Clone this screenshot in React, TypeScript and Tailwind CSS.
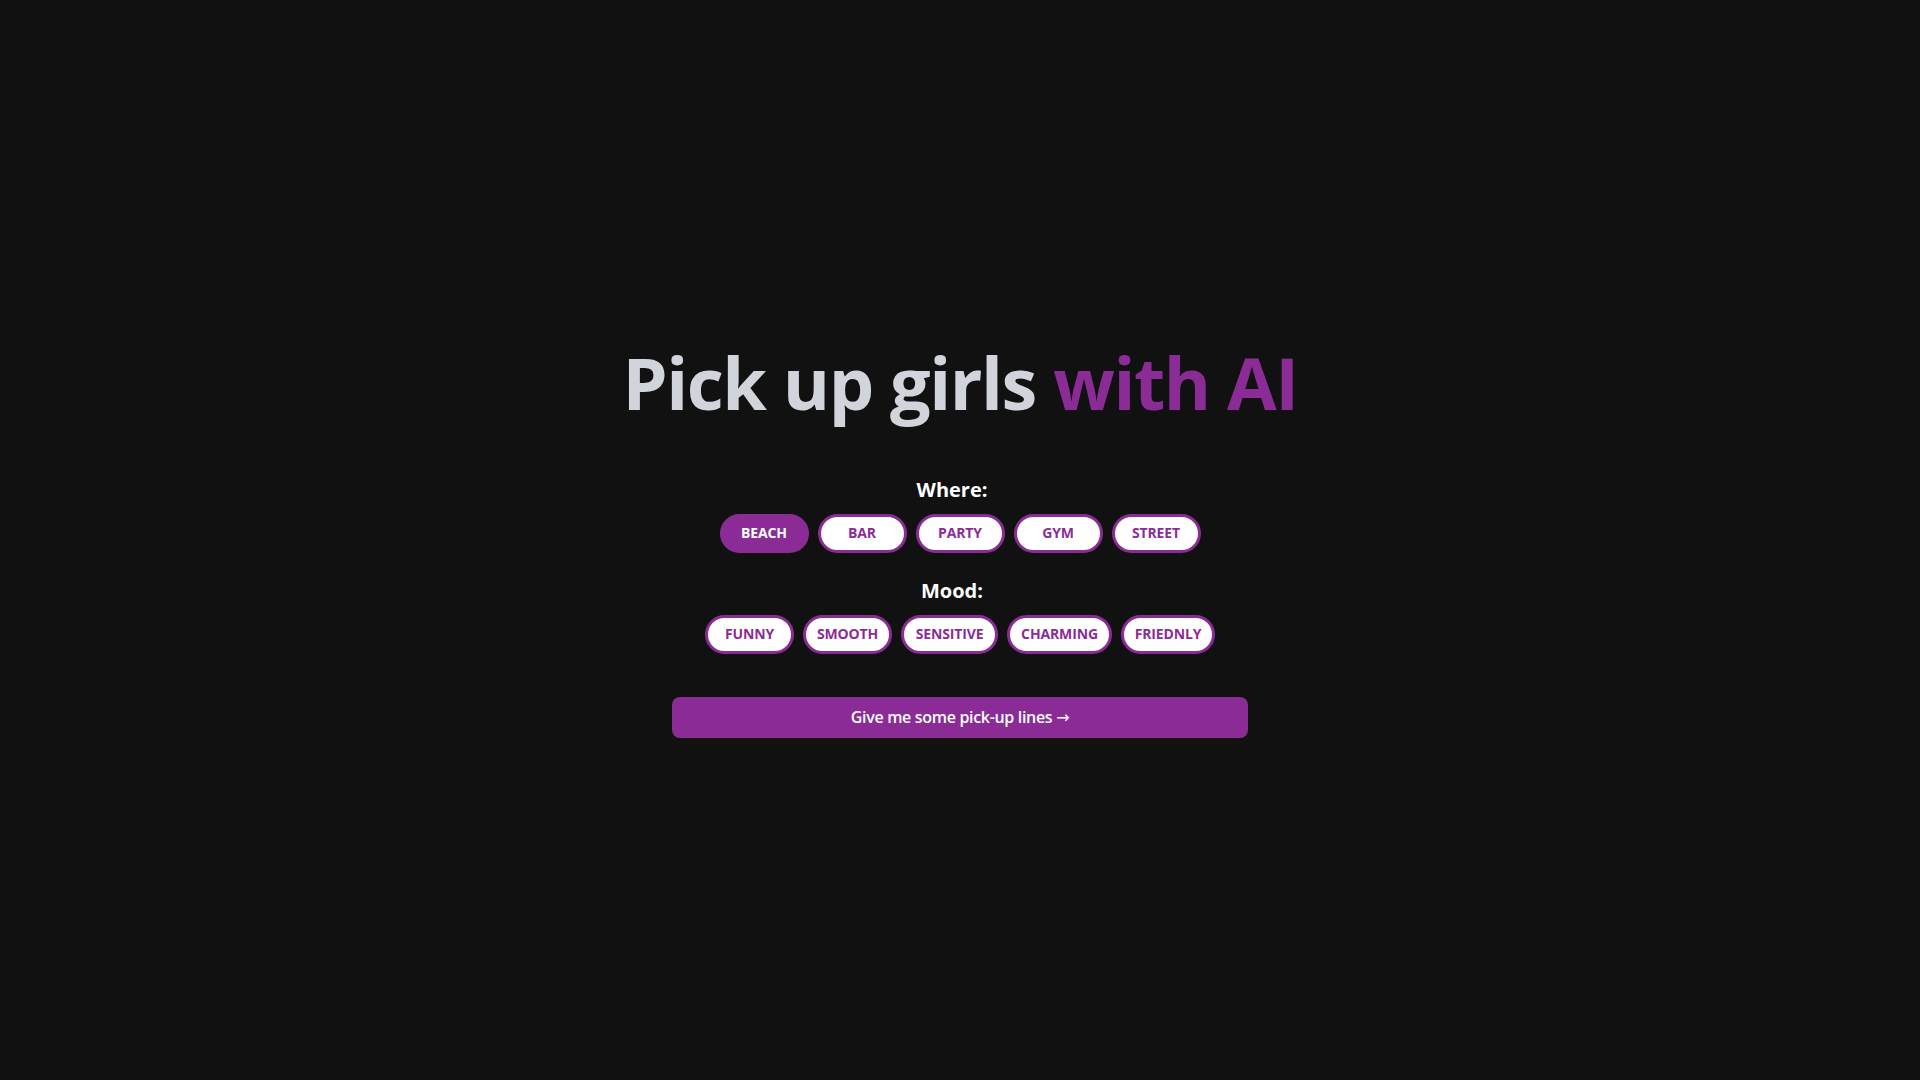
import { useState } from 'react';

const places = ['Beach', 'Bar', 'Party', 'Gym', 'Street'];

const moods = [
  { name: 'Funny', width: 'w-[89px]' },
  { name: 'Smooth', width: 'w-[89px]' },
  { name: 'Sensitive', width: 'w-[97px]' },
  { name: 'Charming', width: 'w-[105px]' },
  { name: 'Friednly', width: 'w-[94px]' },
];

function Pill({ label, active, width, onClick }: { label: string; active: boolean; width: string; onClick: () => void }) {
  return (
    <button
      onClick={onClick}
      className={`${width} h-[39px] rounded-full border-[3px] border-[#8b2c96] text-sm font-bold uppercase leading-5 tracking-[-0.01em] ${
        active ? 'bg-[#8b2c96] text-white' : 'bg-white text-[#8b2c96]'
      }`}
    >
      {label}
    </button>
  );
}

export default function App() {
  const [place, setPlace] = useState('Beach');
  const [mood, setMood] = useState('');

  return (
    <div
      className="min-h-screen bg-[#111111] flex flex-col items-center justify-center"
      style={{ fontFamily: '"Open Sans", "Noto Sans", sans-serif' }}
    >
      <h1 className="pt-[3px] text-7xl leading-none font-bold tracking-[-0.02em] text-[#d1d5db]">
        Pick up girls <span className="text-[#8b2c96]">with AI</span>
      </h1>

      {/* Where */}
      <h2 className="mt-[58px] pr-4 text-xl font-bold text-white">Where:</h2>
      <div className="mt-2.5 flex gap-[9px]">
        {places.map(p => (
          <Pill key={p} label={p} width="w-[89px]" active={place === p} onClick={() => setPlace(p)} />
        ))}
      </div>

      {/* Mood */}
      <h2 className="mt-6 pr-4 text-xl font-bold text-white">Mood:</h2>
      <div className="mt-2.5 flex gap-[9px]">
        {moods.map(m => (
          <Pill key={m.name} label={m.name} width={m.width} active={mood === m.name} onClick={() => setMood(m.name)} />
        ))}
      </div>

      <button className="mt-[43px] w-full max-w-xl rounded-lg bg-[#8b2c96] py-2 text-base font-semibold tracking-[-0.02em] text-white">
        Give me some pick-up lines <span className="font-['DejaVu_Sans'] font-normal">&rarr;</span>
      </button>
    </div>
  );
}
